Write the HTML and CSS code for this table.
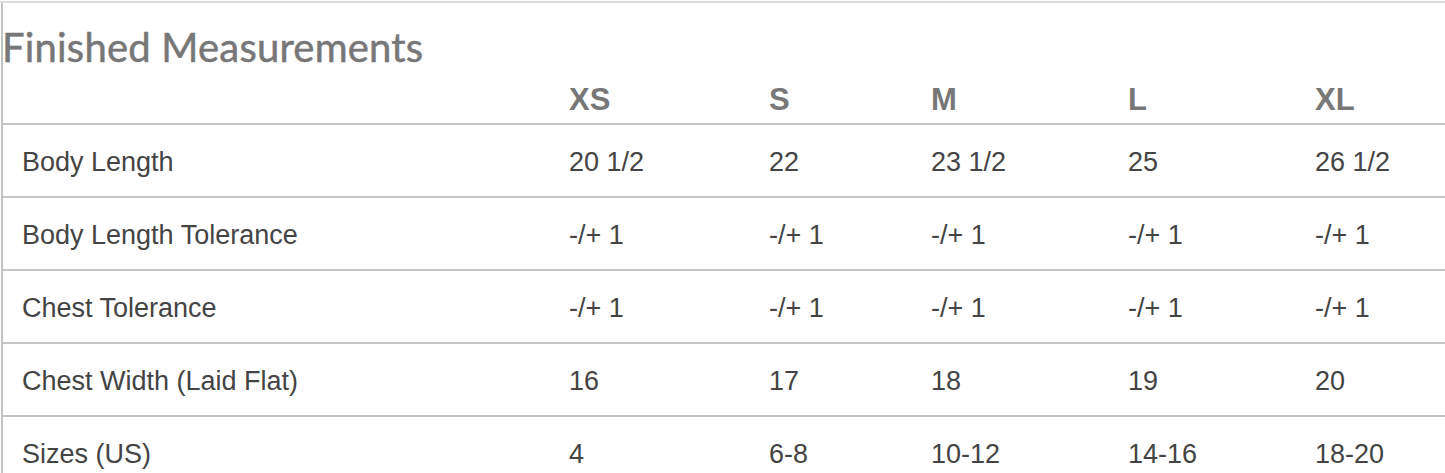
FILE: index.html
```html
<!DOCTYPE html>
<html>
<head>
<meta charset="utf-8">
<link rel="stylesheet" href="styles.css">
</head>
<body>
<div class="top-rule"></div>
<div class="frame">
  <h2 class="title">Finished Measurements</h2>
  <table class="sizes">
    <colgroup>
      <col class="c-label"><col class="c-xs"><col class="c-s"><col class="c-m"><col class="c-l"><col class="c-xl">
    </colgroup>
    <thead>
      <tr><th></th><th>XS</th><th>S</th><th>M</th><th>L</th><th>XL</th></tr>
    </thead>
    <tbody>
      <tr><td>Body Length</td><td>20 1/2</td><td>22</td><td>23 1/2</td><td>25</td><td>26 1/2</td></tr>
      <tr><td>Body Length Tolerance</td><td>-/+ 1</td><td>-/+ 1</td><td>-/+ 1</td><td>-/+ 1</td><td>-/+ 1</td></tr>
      <tr><td>Chest Tolerance</td><td>-/+ 1</td><td>-/+ 1</td><td>-/+ 1</td><td>-/+ 1</td><td>-/+ 1</td></tr>
      <tr><td>Chest Width (Laid Flat)</td><td>16</td><td>17</td><td>18</td><td>19</td><td>20</td></tr>
      <tr><td>Sizes (US)</td><td>4</td><td>6-8</td><td>10-12</td><td>14-16</td><td>18-20</td></tr>
    </tbody>
  </table>
</div>
</body>
</html>
```

FILE: styles.css
```css
html, body {
  margin: 0;
  padding: 0;
  background: #fff;
}

.top-rule {
  margin-top: 1px;
  height: 2px;
  background: #dcdcdc;
}

.frame {
  margin-left: 1px;
  border-left: 2px solid #c2c2c2;
  min-height: 480px;
}

.title {
  margin: 0 0 0 -1px;
  padding: 20px 0 0 0;
  font-family: Lato, "Open Sans", sans-serif;
  font-weight: 400;
  font-size: 40px;
  line-height: 48px;
  letter-spacing: 0.2px;
  color: #777;
  -webkit-text-stroke: 0.5px #777;
}

.sizes {
  width: 1442px;
  border-collapse: collapse;
  table-layout: fixed;
  font-family: "Liberation Sans", Arial, sans-serif;
}

.c-label { width: 546px; }
.c-xs { width: 200px; }
.c-s { width: 162px; }
.c-m { width: 197px; }
.c-l { width: 187px; }
.c-xl { width: 150px; }

.sizes th {
  text-align: left;
  font-size: 31px;
  font-weight: 700;
  color: #777;
  height: 46px;
  padding: 6px 0 0 20px;
  vertical-align: middle;
  border-bottom: 2px solid #c4c4c4;
}

.sizes td {
  font-size: 27px;
  color: #444;
  height: 68px;
  padding: 3px 0 0 20px;
  vertical-align: middle;
  border-bottom: 2px solid #c4c4c4;
}

.sizes td:first-child {
  padding-left: 19px;
}
```
